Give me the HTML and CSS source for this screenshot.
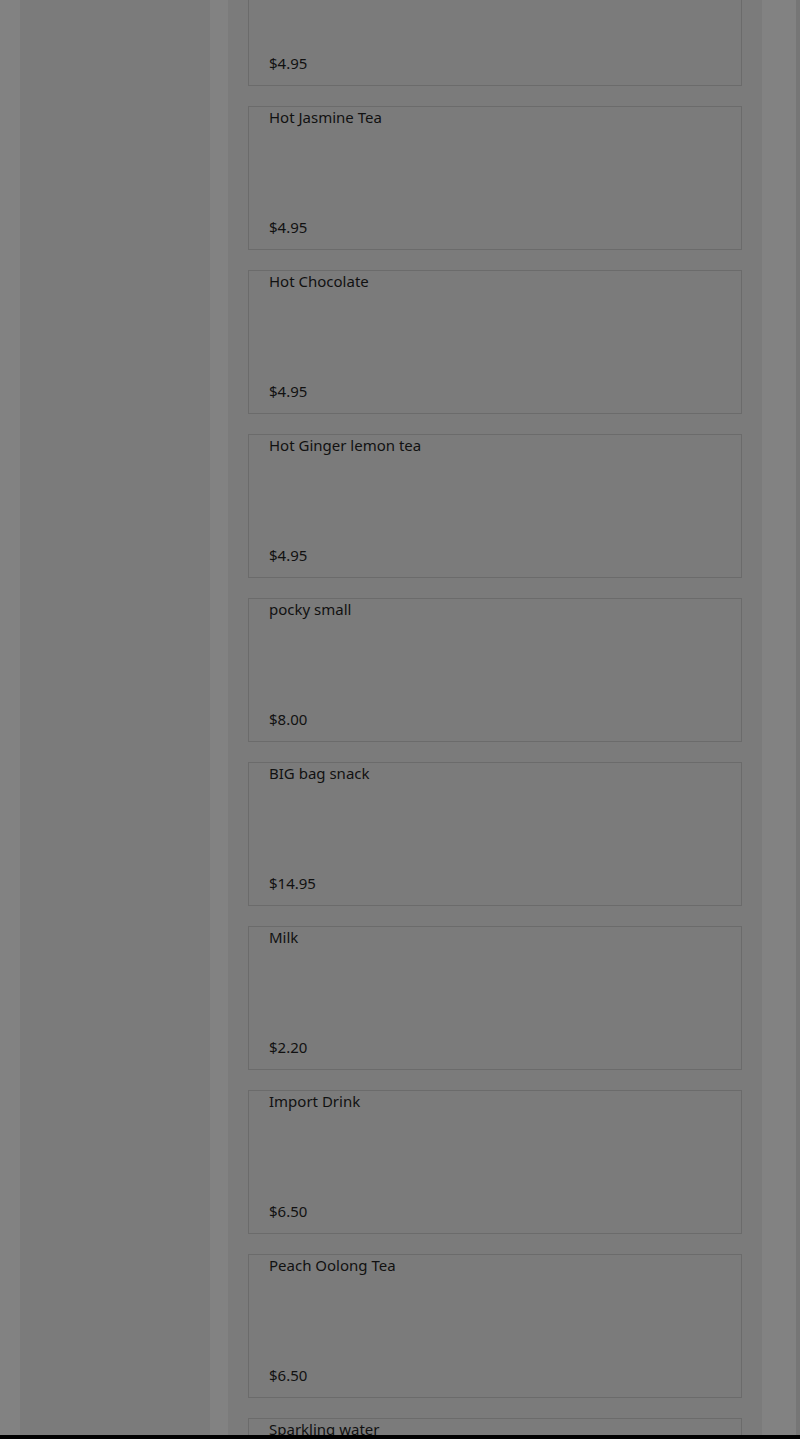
FILE: index.html
```html
<!DOCTYPE html>
<html lang="en">
  <head>
    <meta charset="UTF-8" />
    <meta name="viewport" content="width=device-width, initial-scale=1.0" />
    <title>Menu</title>
    <link rel="stylesheet" href="styles.css">
  </head>
  <body>
    <main class="page">
      <aside class="sidebar"></aside>
      <section class="menu">
        <div class="item">
          <div class="name">Hot Lemon Tea</div>
          <div class="price">$4.95</div>
        </div>
        <div class="item">
          <div class="name">Hot Jasmine Tea</div>
          <div class="price">$4.95</div>
        </div>
        <div class="item">
          <div class="name">Hot Chocolate</div>
          <div class="price">$4.95</div>
        </div>
        <div class="item">
          <div class="name">Hot Ginger lemon tea</div>
          <div class="price">$4.95</div>
        </div>
        <div class="item">
          <div class="name">pocky small</div>
          <div class="price">$8.00</div>
        </div>
        <div class="item">
          <div class="name">BIG bag snack</div>
          <div class="price">$14.95</div>
        </div>
        <div class="item">
          <div class="name">Milk</div>
          <div class="price">$2.20</div>
        </div>
        <div class="item">
          <div class="name">Import Drink</div>
          <div class="price">$6.50</div>
        </div>
        <div class="item">
          <div class="name">Peach Oolong Tea</div>
          <div class="price">$6.50</div>
        </div>
        <div class="item">
          <div class="name">Sparkling water</div>
          <div class="price">$3.50</div>
        </div>
      </section>
      <div class="scrollbar"></div>
    </main>
    <div class="bottom-bar"></div>
  </body>
</html>
```

FILE: styles.css
```css
html,
body {
  margin: 0;
  height: 100%;
  overflow: hidden;
}
body {
  background-color: #828282;
  font-family: "Noto Sans", "Liberation Sans", sans-serif;
  color: #111;
}
.page {
  display: flex;
  gap: 18px;
  padding-left: 20px;
  height: 100%;
}
.sidebar {
  width: 190px;
  flex-shrink: 0;
  background-color: #7b7b7b;
}
.menu {
  width: 534px;
  flex-shrink: 0;
  background-color: #7b7b7b;
  padding: 0 20px;
  box-sizing: border-box;
  display: flex;
  flex-direction: column;
  gap: 20px;
  margin-top: -58px;
}
.item {
  height: 144px;
  flex-shrink: 0;
  box-sizing: border-box;
  border: 1px solid #6b6b6b;
  padding: 0 20px 12px;
  display: flex;
  flex-direction: column;
  justify-content: space-between;
  font-size: 15px;
  line-height: 20px;
}
.scrollbar {
  margin-left: auto;
  width: 4px;
  background-color: #767676;
}
.bottom-bar {
  position: fixed;
  left: 0;
  right: 0;
  bottom: 0;
  height: 4px;
  background-color: #000;
}
```
